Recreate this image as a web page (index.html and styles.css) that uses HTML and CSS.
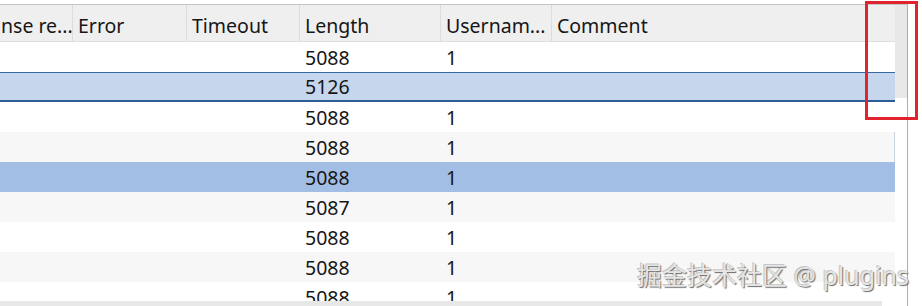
FILE: index.html
```html
<!DOCTYPE html>
<html lang="en">

<head>
    <meta charset="UTF-8">
    <meta name="viewport" content="width=device-width, initial-scale=1.0">
    <title>Intruder results</title>
    <link rel="stylesheet" href="styles.css">
</head>

<body>

    <div class="grid-view">
        <div class="grid-main">
            <div class="grid-row grid-header">
                <div class="cell first">nse re...</div>
                <div class="cell">Error</div>
                <div class="cell">Timeout</div>
                <div class="cell">Length</div>
                <div class="cell">Usernam...</div>
                <div class="cell last">Comment</div>
            </div>
            <div class="grid-body">
                <div class="grid-row">
                    <div class="cell"></div><div class="cell"></div><div class="cell"></div>
                    <div class="cell">5088</div><div class="cell">1</div><div class="cell"></div>
                </div>
                <div class="grid-row selected">
                    <div class="cell"></div><div class="cell"></div><div class="cell"></div>
                    <div class="cell">5126</div><div class="cell"></div><div class="cell"></div>
                </div>
                <div class="grid-row">
                    <div class="cell"></div><div class="cell"></div><div class="cell"></div>
                    <div class="cell">5088</div><div class="cell">1</div><div class="cell"></div>
                </div>
                <div class="grid-row alt edge">
                    <div class="cell"></div><div class="cell"></div><div class="cell"></div>
                    <div class="cell">5088</div><div class="cell">1</div><div class="cell"></div>
                </div>
                <div class="grid-row marked">
                    <div class="cell"></div><div class="cell"></div><div class="cell"></div>
                    <div class="cell">5088</div><div class="cell">1</div><div class="cell"></div>
                </div>
                <div class="grid-row alt">
                    <div class="cell"></div><div class="cell"></div><div class="cell"></div>
                    <div class="cell">5087</div><div class="cell">1</div><div class="cell"></div>
                </div>
                <div class="grid-row">
                    <div class="cell"></div><div class="cell"></div><div class="cell"></div>
                    <div class="cell">5088</div><div class="cell">1</div><div class="cell"></div>
                </div>
                <div class="grid-row alt">
                    <div class="cell"></div><div class="cell"></div><div class="cell"></div>
                    <div class="cell">5088</div><div class="cell">1</div><div class="cell"></div>
                </div>
                <div class="grid-row">
                    <div class="cell"></div><div class="cell"></div><div class="cell"></div>
                    <div class="cell">5088</div><div class="cell">1</div><div class="cell"></div>
                </div>
            </div>
            <div class="hscroll"></div>
        </div>
        <div class="vscroll">
            <div class="vscroll-thumb"></div>
        </div>

        <!-- watermark -->
        <div class="watermark">掘金技术社区 @ plugins</div>
    </div>

    <!-- red annotation box round the scrollbar -->
    <div class="highlight-box"></div>

</body>

</html>
```

FILE: styles.css
```css
* {
    margin: 0;
    padding: 0;
    box-sizing: border-box;
}

body {
    position: relative;
    font-family: 'Noto Sans', 'Segoe UI', sans-serif;
    background: #ffffff;
    color: #161616;
    overflow: hidden;
    height: 306px;
}

.grid-view {
    position: relative;
    display: flex;
    width: 908px;
    height: 302px;
    margin-top: 4px;
    border-top: 1px solid #c6c6c6;
    border-right: 1px solid #acacac;
}

.grid-main {
    width: 895px;
    display: flex;
    flex-direction: column;
}

.grid-row {
    display: grid;
    grid-template-columns: 73px 114px 113px 141px 111px 1fr;
    height: 30px;
    font-size: 19.5px;
    background: #ffffff;
}

.cell {
    padding-left: 5px;
    white-space: nowrap;
    overflow: hidden;
    display: flex;
    align-items: center;
}

/* Header */
.grid-header {
    height: 37px;
    background: #efefef;
    border-bottom: 1px solid #dedede;
}

.grid-header .cell {
    border-right: 1px solid #dcdcdc;
    padding-top: 4px;
}

.grid-header .cell.first {
    padding-left: 1px;
}

.grid-header .cell.last {
    border-right: none;
}

/* Body rows */
.grid-body {
    height: 259px;
    overflow: hidden;
}

.grid-row.alt {
    background: #f7f7f7;
}

.grid-row.edge {
    border-right: 1px solid #c9d4e3;
}

.grid-row.selected {
    background: #c5d6ed;
    border-top: 1px solid #3567a3;
    border-bottom: 2px solid #2c5d98;
}

.grid-row.marked {
    background: #a3bee4;
}

/* Scrollbars */
.hscroll {
    width: 882px;
    height: 5px;
    background: #e7e7e7;
}

.vscroll {
    width: 12px;
}

.vscroll-thumb {
    height: 93px;
    background: #e8e8e8;
}

/* Watermark */
.watermark {
    position: absolute;
    left: 637px;
    top: 258px;
    font-family: 'Noto Sans', 'Noto Sans CJK SC', sans-serif;
    font-size: 25px;
    line-height: 1;
    white-space: nowrap;
    color: #e6e6e6;
    text-shadow: 1px 1px 1px #6a6a6a, -1px -1px 0 rgba(150, 150, 150, 0.5);
}

.highlight-box {
    position: absolute;
    left: 865px;
    top: 1px;
    width: 53px;
    height: 119px;
    border: 3px solid #e0232c;
}
```
